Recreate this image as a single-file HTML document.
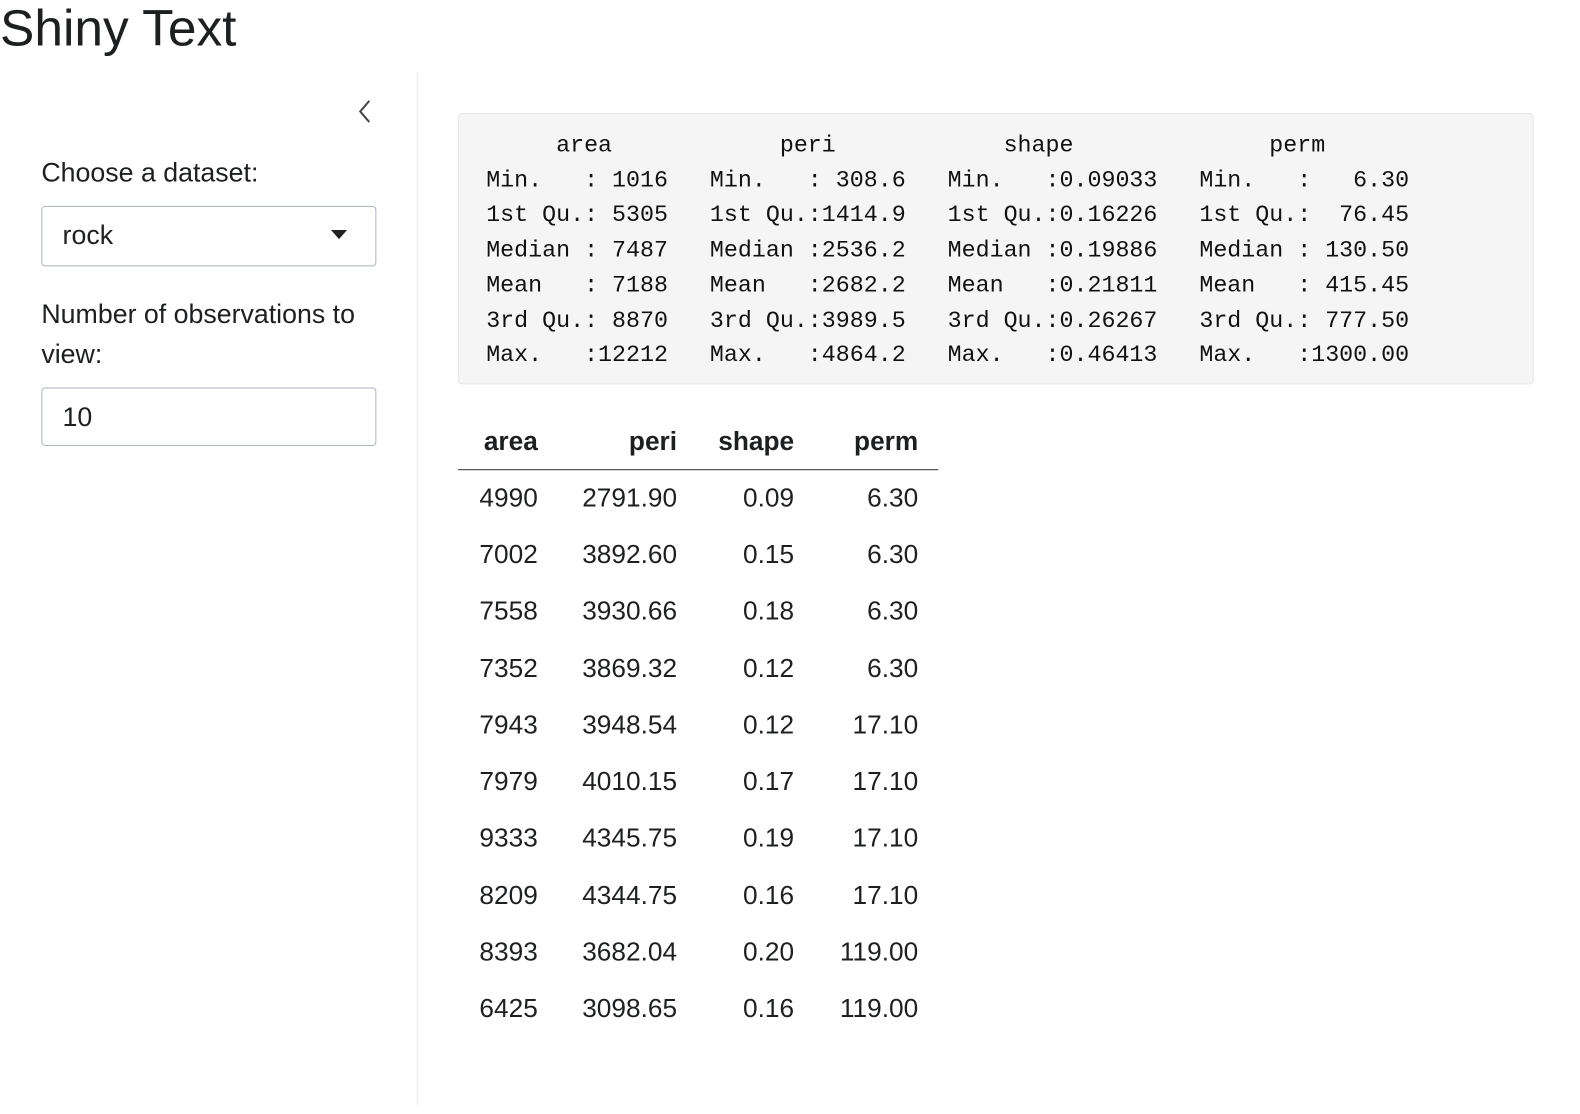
<!DOCTYPE html>
<html><head><meta charset="utf-8"><style>
*{margin:0;padding:0;box-sizing:border-box}
body{width:1580px;height:1114px;background:#fff;color:#1d1f21;font-family:"Liberation Sans",sans-serif;position:relative;overflow:hidden}
#w{position:absolute;left:0;top:0;width:1566px;height:1104px;transform:scale(1.009);transform-origin:0 0}
.a{position:absolute;white-space:nowrap}
h1{position:absolute;left:0;top:-4px;font-size:51px;font-weight:normal;line-height:64px}
.lbl{font-size:26.5px;line-height:40px}
.box{position:absolute;border:1px solid #adb5bd;border-radius:4px;background:#fff}
pre{position:absolute;left:454px;top:112px;width:1066px;height:269px;background:#f5f5f5;border:1px solid #e6e6e6;border-radius:4px;font-family:"Liberation Mono",monospace;font-size:23.1px;line-height:34.7px;padding:14px 0 0 13px;color:#111}
table{position:absolute;left:454px;top:410px;border-collapse:collapse;font-size:26px}
th{font-weight:bold;height:55px;border-bottom:1.5px solid #333;padding:0 20px;text-align:right}
td{height:56.3px;padding:0 20px;text-align:right}
</style></head><body><div id="w">
<h1>Shiny Text</h1>
<div class="a" style="left:413px;top:72px;width:1px;height:1023px;background:#e6e6e6"></div>
<svg class="a" style="left:352px;top:98px" width="20" height="26" viewBox="0 0 20 26"><path d="M14 2 L5 12.5 L14 23" fill="none" stroke="#444" stroke-width="2"/></svg>
<div class="a lbl" style="left:41px;top:151px">Choose a dataset:</div>
<div class="box" style="left:41px;top:204px;width:332px;height:60px"></div>
<div class="a lbl" style="left:62px;top:213px">rock</div>
<svg class="a" style="left:328px;top:228px" width="16" height="10"><path d="M0 0H16L8 9Z" fill="#222"/></svg>
<div class="a lbl" style="left:41px;top:291px">Number of observations to</div>
<div class="a lbl" style="left:41px;top:331px">view:</div>
<div class="box" style="left:41px;top:384px;width:332px;height:58px"></div>
<div class="a lbl" style="left:62px;top:393px">10</div>
<pre>      area            peri            shape              perm       
 Min.   : 1016   Min.   : 308.6   Min.   :0.09033   Min.   :   6.30  
 1st Qu.: 5305   1st Qu.:1414.9   1st Qu.:0.16226   1st Qu.:  76.45  
 Median : 7487   Median :2536.2   Median :0.19886   Median : 130.50  
 Mean   : 7188   Mean   :2682.2   Mean   :0.21811   Mean   : 415.45  
 3rd Qu.: 8870   3rd Qu.:3989.5   3rd Qu.:0.26267   3rd Qu.: 777.50  
 Max.   :12212   Max.   :4864.2   Max.   :0.46413   Max.   :1300.00  </pre>
<table>
<colgroup><col style="width:99px"><col style="width:138px"><col style="width:116px"><col style="width:123px"></colgroup>
<tr><th>area</th><th>peri</th><th>shape</th><th>perm</th></tr>
<tr><td>4990</td><td>2791.90</td><td>0.09</td><td>6.30</td></tr>
<tr><td>7002</td><td>3892.60</td><td>0.15</td><td>6.30</td></tr>
<tr><td>7558</td><td>3930.66</td><td>0.18</td><td>6.30</td></tr>
<tr><td>7352</td><td>3869.32</td><td>0.12</td><td>6.30</td></tr>
<tr><td>7943</td><td>3948.54</td><td>0.12</td><td>17.10</td></tr>
<tr><td>7979</td><td>4010.15</td><td>0.17</td><td>17.10</td></tr>
<tr><td>9333</td><td>4345.75</td><td>0.19</td><td>17.10</td></tr>
<tr><td>8209</td><td>4344.75</td><td>0.16</td><td>17.10</td></tr>
<tr><td>8393</td><td>3682.04</td><td>0.20</td><td>119.00</td></tr>
<tr><td>6425</td><td>3098.65</td><td>0.16</td><td>119.00</td></tr>
</table>
</div></body></html>
